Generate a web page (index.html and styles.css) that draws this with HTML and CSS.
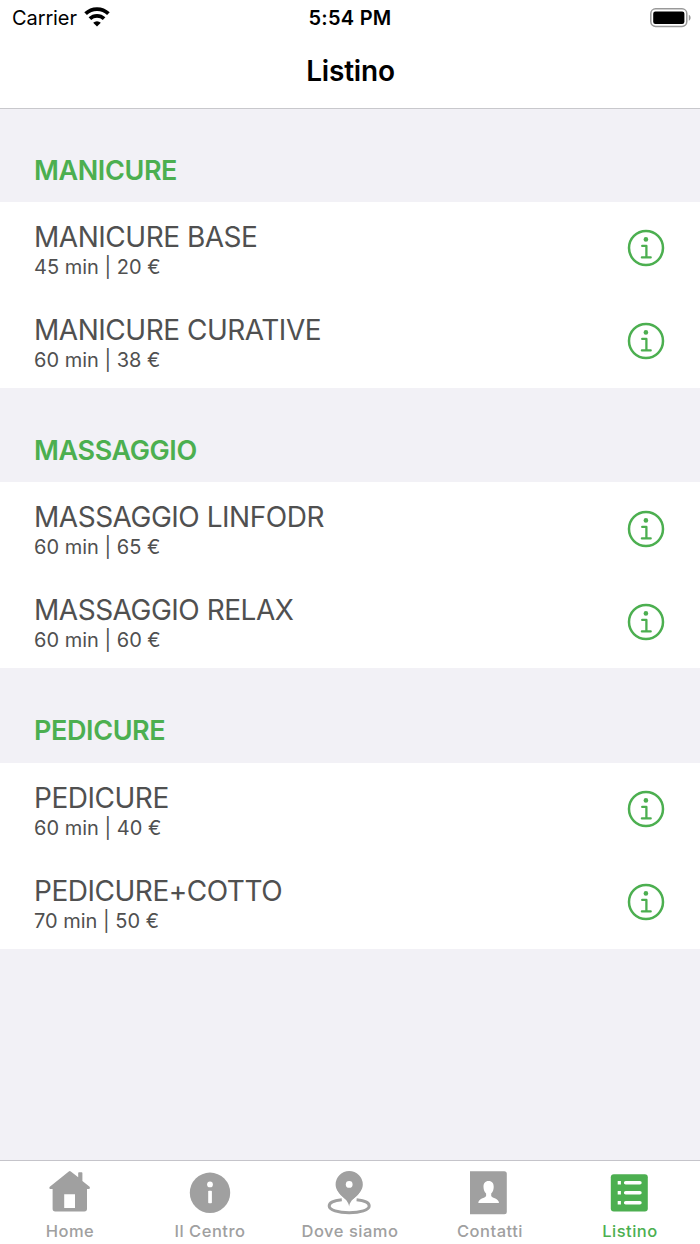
FILE: index.html
```html
<!DOCTYPE html>
<html lang="it">
<head>
    <meta charset="UTF-8">
    <meta name="viewport" content="width=device-width, initial-scale=1.0">
    <title>Listino</title>
    <link rel="stylesheet" href="styles.css">
</head>
<body>
    <svg class="icon-defs" aria-hidden="true">
        <symbol id="icon-info" viewBox="0 0 38 38">
            <circle cx="19" cy="19" r="17" fill="none" stroke="currentColor" stroke-width="2.5"/>
            <circle cx="18.9" cy="10.4" r="2.3" fill="currentColor"/>
            <path d="M15.2 16.9H19.4V28.4M14.9 28.4H23.7" fill="none" stroke="currentColor" stroke-width="2.3" stroke-linecap="round" stroke-linejoin="round"/>
        </symbol>
    </svg>

    <header class="header">
        <div class="status-bar">
            <div class="carrier">
                <span>Carrier</span>
                <svg class="wifi" width="26" height="20" viewBox="0 0 26 20">
                    <path d="M1.6 6.700a16.400 16.400 0 0 1 22.800 0" fill="none" stroke="#000" stroke-width="3.800"/>
                    <path d="M5.900 11.700a10.300 10.300 0 0 1 14.200 0" fill="none" stroke="#000" stroke-width="3.700"/>
                    <path d="M13 19.400L9.200 15.700a5.500 5.500 0 0 1 7.600 0z"/>
                </svg>
            </div>
            <div class="time">5:54 PM</div>
            <svg class="battery" width="42" height="20" viewBox="0 0 42 20">
                <rect x="0.8" y="0.8" width="36" height="17.6" rx="4.800" fill="none" stroke="#999" stroke-width="1.5"/>
                <rect x="3.200" y="3.500" width="31.200" height="12.400" rx="2.200"/>
                <path d="M38.800 6.800c2.400.8 2.400 5.200 0 6z" fill="#999"/>
            </svg>
        </div>
        <h1>Listino</h1>
    </header>

    <main class="content">
        <section>
            <h2>MANICURE</h2>
            <div class="item">
                <div>
                    <div class="item-name">MANICURE BASE</div>
                    <div class="item-detail">45 min | 20 €</div>
                </div>
                <svg class="info-icon"><use href="#icon-info"/></svg>
            </div>
            <div class="item">
                <div>
                    <div class="item-name">MANICURE CURATIVE</div>
                    <div class="item-detail">60 min | 38 €</div>
                </div>
                <svg class="info-icon"><use href="#icon-info"/></svg>
            </div>
        </section>

        <section>
            <h2>MASSAGGIO</h2>
            <div class="item">
                <div>
                    <div class="item-name">MASSAGGIO LINFODR</div>
                    <div class="item-detail">60 min | 65 €</div>
                </div>
                <svg class="info-icon"><use href="#icon-info"/></svg>
            </div>
            <div class="item">
                <div>
                    <div class="item-name">MASSAGGIO RELAX</div>
                    <div class="item-detail">60 min | 60 €</div>
                </div>
                <svg class="info-icon"><use href="#icon-info"/></svg>
            </div>
        </section>

        <section>
            <h2>PEDICURE</h2>
            <div class="item">
                <div>
                    <div class="item-name">PEDICURE</div>
                    <div class="item-detail">60 min | 40 €</div>
                </div>
                <svg class="info-icon"><use href="#icon-info"/></svg>
            </div>
            <div class="item">
                <div>
                    <div class="item-name">PEDICURE+COTTO</div>
                    <div class="item-detail">70 min | 50 €</div>
                </div>
                <svg class="info-icon"><use href="#icon-info"/></svg>
            </div>
        </section>
    </main>

    <nav class="tab-bar">
        <a class="tab">
            <svg viewBox="0 0 46 46">
                <path d="M21.8 1.500q1-.8 2 0L31.200 7.200V3q0-.8.8-.8H34.600q.8 0 .8.8V11L42.600 16.800Q43.600 19 41.500 19H40V38.800q0 2.600-2.600 2.600H8.200q-2.600 0-2.600-2.600V19H3.500Q1.600 18.700 2.800 16.800zM17.200 24.300V38H28V24.300z" fill="currentColor" fill-rule="evenodd"/>
            </svg>
            <span>Home</span>
        </a>
        <a class="tab">
            <svg viewBox="0 0 46 46">
                <circle cx="23" cy="22.800" r="20.200" fill="currentColor"/>
                <circle cx="23" cy="14.400" r="2.900" fill="#fff"/>
                <rect x="21.200" y="20.800" width="3.700" height="12.400" rx=".8" fill="#fff"/>
            </svg>
            <span>Il Centro</span>
        </a>
        <a class="tab">
            <svg viewBox="0 0 46 46">
                <path d="M22.200 36.400C21.500 27.800 8.600 24.500 8.600 14.400a13.600 13.400 0 0 1 27.200 0C35.800 24.500 22.900 27.800 22.200 36.400z" fill="currentColor"/>
                <path d="M10.500 20Q12 24.500 19 29.500H25.400Q32.400 24.500 33.900 20z" fill="currentColor"/>
                <circle cx="22.200" cy="14.400" r="3.400" fill="#fff"/>
                <path d="M14.800 29.800C6.700 30.500 2.200 33 2.200 36c0 4 9 6.800 20 6.800s20-2.800 20-6.800c0-3-4.500-5.500-12.600-6.200" fill="none" stroke="currentColor" stroke-width="3"/>
            </svg>
            <span>Dove siamo</span>
        </a>
        <a class="tab">
            <svg viewBox="0 0 46 46">
                <path d="M3 1.200H37.300q2.500 0 2.500 2.500V41.800q0 2.500-2.500 2.500H3z" fill="currentColor"/>
                <path d="M21.600 11c3.600 0 5.200 2.500 5.100 6-.1 3-.8 4.900-2.500 6.500v2.500c1.200 2.500 7.500 2 7.800 7H11.300c.3-5 6.600-4.500 7.800-7v-2.500c-1.700-1.600-2.500-3.500-2.600-6.500-.1-3.500 1.500-6 5.100-6z" fill="#fff"/>
            </svg>
            <span>Contatti</span>
        </a>
        <a class="tab active">
            <svg viewBox="0 0 46 46">
                <rect x="3.800" y="4.200" width="37" height="37.200" rx="3" fill="currentColor"/>
                <path d="M10.700 12.800h3.200M10.700 22.800h3.200M10.700 32.700h3.200" stroke="#fff" stroke-width="3.400"/>
                <path d="M18.700 12.800h14.200M18.700 22.800h14.200M18.700 32.700h14.200" stroke="#fff" stroke-width="3.600" stroke-linecap="round"/>
            </svg>
            <span>Listino</span>
        </a>
    </nav>
</body>
</html>
```
FILE: styles.css
```css
* {
    box-sizing: border-box;
}
body {
    font-family: Inter, Roboto, sans-serif;
    margin: 0;
    height: 1244px;
    display: flex;
    flex-direction: column;
    background-color: #f2f1f6;
    color: #505050;
}
.icon-defs {
    display: none;
}
.header {
    height: 109px;
    background-color: white;
    border-bottom: 1px solid #c8c8cc;
    color: black;
}
.status-bar {
    display: grid;
    grid-template-columns: 1fr auto 1fr;
    height: 36px;
    padding: 0 8px 0 12px;
    align-items: center;
    font-size: 20px;
}
.carrier {
    display: flex;
    gap: 7px;
    letter-spacing: -0.1px;
}
.wifi {
    margin-top: 1px;
}
.time {
    font-weight: 600;
    margin-left: -4px;
    letter-spacing: 0.25px;
}
.battery {
    justify-self: end;
}
h1 {
    margin: 0;
    padding-left: 1px;
    text-align: center;
    font-size: 28px;
    line-height: 71px;
    font-weight: 600;
    letter-spacing: -0.2px;
}
.content {
    flex: 1;
}
h2 {
    margin: 0;
    padding: 31px 34px 0;
    height: 94.8px;
    color: #4caf50;
    font-size: 27px;
    line-height: 64px;
    font-weight: 600;
    letter-spacing: -0.4px;
}
section:first-child h2 {
    height: 93px;
    padding-top: 30px;
}
.item {
    display: flex;
    justify-content: space-between;
    height: 92.85px;
    padding: 18px 35px 0 34px;
    background-color: white;
}
.item-name {
    font-size: 28px;
    line-height: 34px;
    letter-spacing: -0.48px;
}
.item-detail {
    font-size: 20px;
    line-height: 26px;
}
.info-icon {
    width: 38px;
    height: 38px;
    margin-top: 9.4px;
    color: #4caf50;
}
.tab-bar {
    display: flex;
    height: 84px;
    background-color: white;
    border-top: 1px solid #c5c4ca;
}
.tab {
    flex: 1;
    display: flex;
    flex-direction: column;
    align-items: center;
    padding-top: 9px;
    color: #a0a0a0;
    font-size: 16.5px;
    line-height: 24px;
    font-weight: 500;
    letter-spacing: 0.5px;
}
.tab svg {
    width: 46px;
    height: 46px;
    margin-bottom: 3px;
}
.tab.active {
    color: #4caf50;
}
```
